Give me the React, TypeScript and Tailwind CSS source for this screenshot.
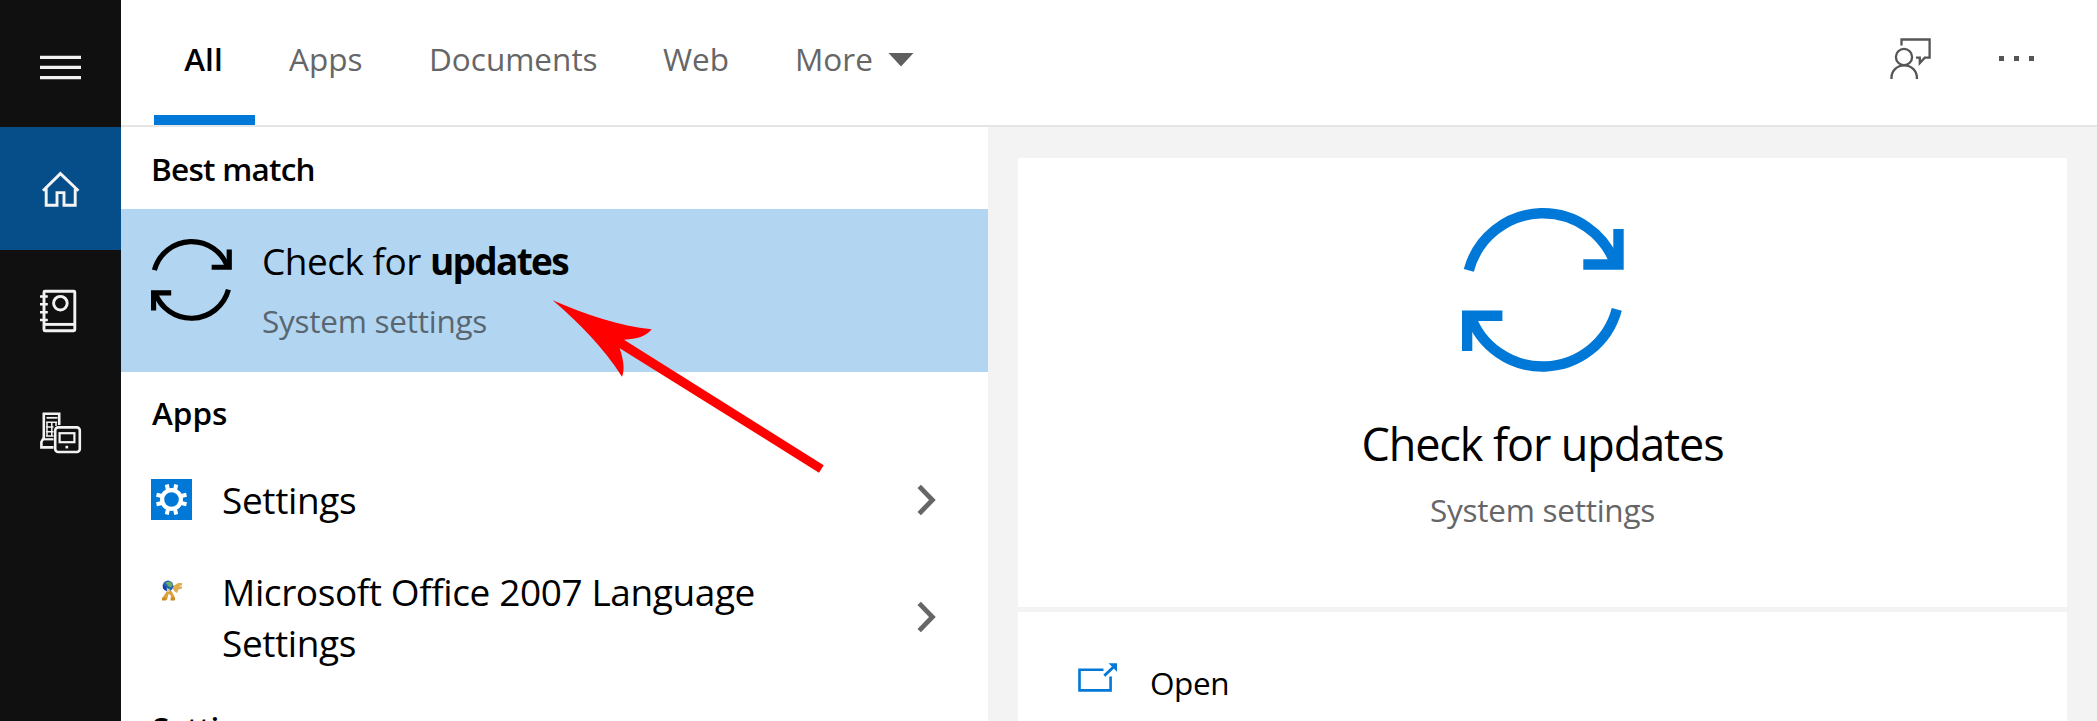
import type { ReactNode } from "react";

function SyncIcon({ className }: { className: string }) {
  return (
    <svg viewBox="0 0 162 164" className={className} fill="none" stroke="currentColor" strokeWidth="10.4">
      <path d="M6.8 62.4A76.8 76.8 0 0 1 153.8 57.5" />
      <path d="M156.5 21V56.5H121.3" />
      <path d="M154.8 101.4A76.8 76.8 0 0 1 7.8 106.3" />
      <path d="M5.1 143V107.8H40.4" />
    </svg>
  );
}

function MenuIcon() {
  return (
    <svg width="48" height="48" viewBox="36 43 48 48" fill="none" stroke="#f2f2f2" strokeWidth="3.2">
      <path d="M40 57.4H81M40 67.4H81M40 77.7H81" />
    </svg>
  );
}

function HomeIcon() {
  return (
    <svg width="48" height="48" viewBox="36 165 48 48" fill="none" stroke="#f4f4f4" strokeWidth="2.9">
      <path d="M43 190.8L60.4 173.6L78.4 190.8" />
      <path d="M46.2 188.5V205.2H57V192.6H64V205.2H75.2V188.5" />
    </svg>
  );
}

function NotebookIcon() {
  return (
    <svg width="48" height="48" viewBox="36 287 48 48" fill="none" stroke="#f2f2f2" strokeWidth="2.9">
      <rect x="44" y="291.3" width="30.8" height="39.4" rx="1" />
      <path d="M44 324.4H74.8" />
      <circle cx="60.4" cy="303.2" r="6.8" />
      <path d="M40 296.5H47.8M40 304.3H47.8M40 312.2H47.8M40 320H47.8" strokeWidth="2.4" />
    </svg>
  );
}

function DevicesIcon() {
  return (
    <svg width="48" height="48" viewBox="36 409 48 48" fill="none" stroke="#f2f2f2" strokeWidth="2.6">
      <path d="M59.2 425V413.8H43.8V437.5L41.4 442V447.4H53.5" />
      <path d="M42 439.3H53.5" strokeWidth="2.2" />
      <path d="M46.5 417.8H57.5" strokeWidth="1.8" />
      <path d="M47 422V436M51.8 422V436M56 422V426M46 422.3H57M46 427H53.5M46 431.7H53.5M46 436H53.5" strokeWidth="1.5" />
      <rect x="55.2" y="427.4" width="24.6" height="24.6" rx="3" />
      <rect x="59.6" y="433.2" width="14.8" height="9" strokeWidth="2.2" />
      <rect x="65.5" y="445.8" width="2.6" height="2.6" fill="#f2f2f2" stroke="none" />
    </svg>
  );
}

function FeedbackIcon() {
  return (
    <svg width="48" height="48" viewBox="1886 35 48 48" fill="none" stroke="#555555" strokeWidth="2.3">
      <path d="M1901.5 45.5V39.5H1929.6V57.7H1924.8L1919.8 63V57.7H1916" />
      <circle cx="1904" cy="57" r="8.1" />
      <path d="M1891.5 79V77.6A12.7 12.3 0 0 1 1916.9 77.6V79" />
    </svg>
  );
}

function OpenIcon() {
  return (
    <svg width="42" height="32" viewBox="1077 660 42 32" fill="none" stroke="#0078d7" strokeWidth="2.6">
      <path d="M1103.5 668.7H1079.5V689.4H1110.6V675.5" />
      <path d="M1104.3 674.8L1113.5 666" strokeWidth="2.9" />
      <path d="M1108.6 662.3H1117V670.7Z" fill="#0078d7" stroke="none" />
    </svg>
  );
}

function GearIcon() {
  return (
    <svg width="41" height="41" viewBox="0 0 41 41" className="bg-[#0078d7]" fill="none" stroke="#ffffff">
      <circle cx="20.5" cy="20.5" r="9.4" strokeWidth="4.2" />
      <path
        d="M15.8 5.5L17.2 12M25.2 5.5L23.8 12M15.8 35.5L17.2 29M25.2 35.5L23.8 29M5.5 15.8L12 17.2M5.5 25.2L12 23.8M35.5 15.8L29 17.2M35.5 25.2L29 23.8"
        strokeWidth="4"
      />
    </svg>
  );
}

function LanguageToolIcon() {
  return (
    <svg width="22" height="22" viewBox="0 0 22 22">
      <path d="M6 11L2 17V20H6L7.5 14L9.5 15L11 20H14V17.5L10.5 11Z" fill="#dba23c" />
      <path d="M1 17.6H5V20.6H1ZM9.6 17.6H13.8V20.6H9.6Z" fill="#c98c26" />
      <path d="M11 6L14 5L17 3H21V5L18 6.5H21V8.5L17.5 9.5L16 13L13 11Z" fill="#e0ad4e" />
      <circle cx="7" cy="6" r="5.4" fill="#2861b8" />
      <path d="M4.5 2.5L9 1.5L12 5L9.5 7.5L7 6Z" fill="#69ad62" />
      <path d="M1.8 5L5 6.5V10L2.3 9Z" fill="#173f9c" />
      <path d="M6 8L9 9.5L8.5 12H6Z" fill="#e9c98a" />
    </svg>
  );
}

function Chevron() {
  return (
    <svg width="20" height="34" viewBox="0 0 20 34" fill="none" stroke="#666666" strokeWidth="4.8">
      <path d="M2.2 3.4L15.4 17L2.2 30.6" />
    </svg>
  );
}

function SideItem({ children, className }: { children: ReactNode; className: string }) {
  return <div className={`flex w-full items-center pl-[36px] ${className}`}>{children}</div>;
}

export default function App() {
  return (
    <div className="relative flex h-[721px] w-[2097px] overflow-hidden bg-white font-['Open_Sans',sans-serif] text-[31.5px] text-black">
      <nav className="flex w-[121px] shrink-0 flex-col bg-[#101010]">
        <SideItem className="h-[127px] pt-[7px]"><MenuIcon /></SideItem>
        <SideItem className="h-[123px] bg-[#064e89]"><HomeIcon /></SideItem>
        <SideItem className="h-[122px]"><NotebookIcon /></SideItem>
        <SideItem className="h-[122px]"><DevicesIcon /></SideItem>
      </nav>

      <div className="flex min-w-0 flex-1 flex-col">
        <header className="flex h-[127px] shrink-0 items-stretch border-b-2 border-[#e5e5e5] pl-[33px] text-[#666666]">
          <div className="flex w-[101px] flex-col border-b-10 border-[#0078d7] pt-[37px] pr-[2px] text-center leading-[44px] font-semibold text-black">
            All
          </div>
          <div className="flex flex-1 pt-[37px] leading-[44px]">
            <div className="w-[139px] pl-[34px]">Apps</div>
            <div className="w-[236px] pl-[35px]">Documents</div>
            <div className="w-[131px] pl-[33px]">Web</div>
            <div className="flex items-start gap-[15px] pl-[34px]">
              More
              <svg width="26" height="14" viewBox="0 0 26 14" className="mt-[16px]">
                <path d="M0.5 0H25.5L13 13.5Z" fill="#5f5f5f" />
              </svg>
            </div>
          </div>
          <div className="flex items-start pt-[35px] pr-[63px]">
            <FeedbackIcon />
            <div className="ml-[65px] flex gap-[10px] pt-[21px]">
              <i className="size-[5px] bg-[#555555]" />
              <i className="size-[5px] bg-[#555555]" />
              <i className="size-[5px] bg-[#555555]" />
            </div>
          </div>
        </header>

        <div className="flex min-h-0 flex-1">
          <section className="flex w-[867px] shrink-0 flex-col overflow-hidden">
            <h2 className="h-[82px] shrink-0 pt-[20px] pl-[30px] leading-[44px] font-semibold tracking-[-0.75px]">Best match</h2>
            <div className="flex h-[163px] shrink-0 bg-[#b2d6f2] pl-[30px]">
              <SyncIcon className="mt-[30px] h-[82px] w-[81px] shrink-0" />
              <div className="pl-[30px]">
                <div className="pt-[26px] text-[37px] leading-[52px] tracking-[-0.5px]">
                  Check for <b className="font-bold tracking-[-1.7px]">updates</b>
                </div>
                <div className="pt-[12px] leading-[44px] tracking-[-0.25px] text-[#59666f]">System settings</div>
              </div>
            </div>
            <h2 className="h-[78px] shrink-0 pt-[19px] pl-[31px] leading-[44px] font-semibold">Apps</h2>
            <div className="flex h-[99px] shrink-0 items-center pr-[51px] pl-[30px]">
              <GearIcon />
              <div className="flex-1 pl-[30px] text-[37px] leading-[51px] tracking-[-0.35px]">Settings</div>
              <Chevron />
            </div>
            <div className="flex h-[136px] shrink-0 items-center pr-[51px] pl-[40px]">
              <div className="mb-[53px]"><LanguageToolIcon /></div>
              <div className="flex-1 pl-[39px] text-[37px] leading-[51px] tracking-[-0.4px]">
                Microsoft Office 2007 Language
                <br />
                Settings
              </div>
              <Chevron />
            </div>
            <h2 className="shrink-0 pt-[21px] pl-[31px] leading-[44px] font-semibold tracking-[-0.5px]">Settings</h2>
          </section>

          <section className="flex flex-1 flex-col gap-[5px] bg-[#f3f3f3] pt-[31px] pr-[30px] pl-[30px]">
            <div className="flex h-[449px] shrink-0 flex-col items-center bg-white pt-[50px]">
              <SyncIcon className="h-[164px] w-[162px] shrink-0 text-[#0078d7]" />
              <div className="pt-[40px] text-[45px] leading-[63px] tracking-[-1.1px]">Check for updates</div>
              <div className="pt-[12px] leading-[46px] tracking-[-0.25px] text-[#666666]">System settings</div>
            </div>
            <div className="flex flex-1 bg-white pt-[49px] pl-[59px]">
              <OpenIcon />
              <div className="pl-[31px] leading-[44px] tracking-[-0.4px]">Open</div>
            </div>
          </section>
        </div>
      </div>

      <svg className="absolute top-[290px] left-[540px]" width="300" height="200" viewBox="540 290 300 200">
        <path
          d="M552.7 300.3C586 315 620 326 651.7 329.3C646 336.5 637 339 624 339.7L823.7 465.3L819 472.7L619.7 348.3C623.5 360 625 369 622 376.7C603 347 580 324 552.7 300.3Z"
          fill="#ff0000"
        />
      </svg>
    </div>
  );
}
